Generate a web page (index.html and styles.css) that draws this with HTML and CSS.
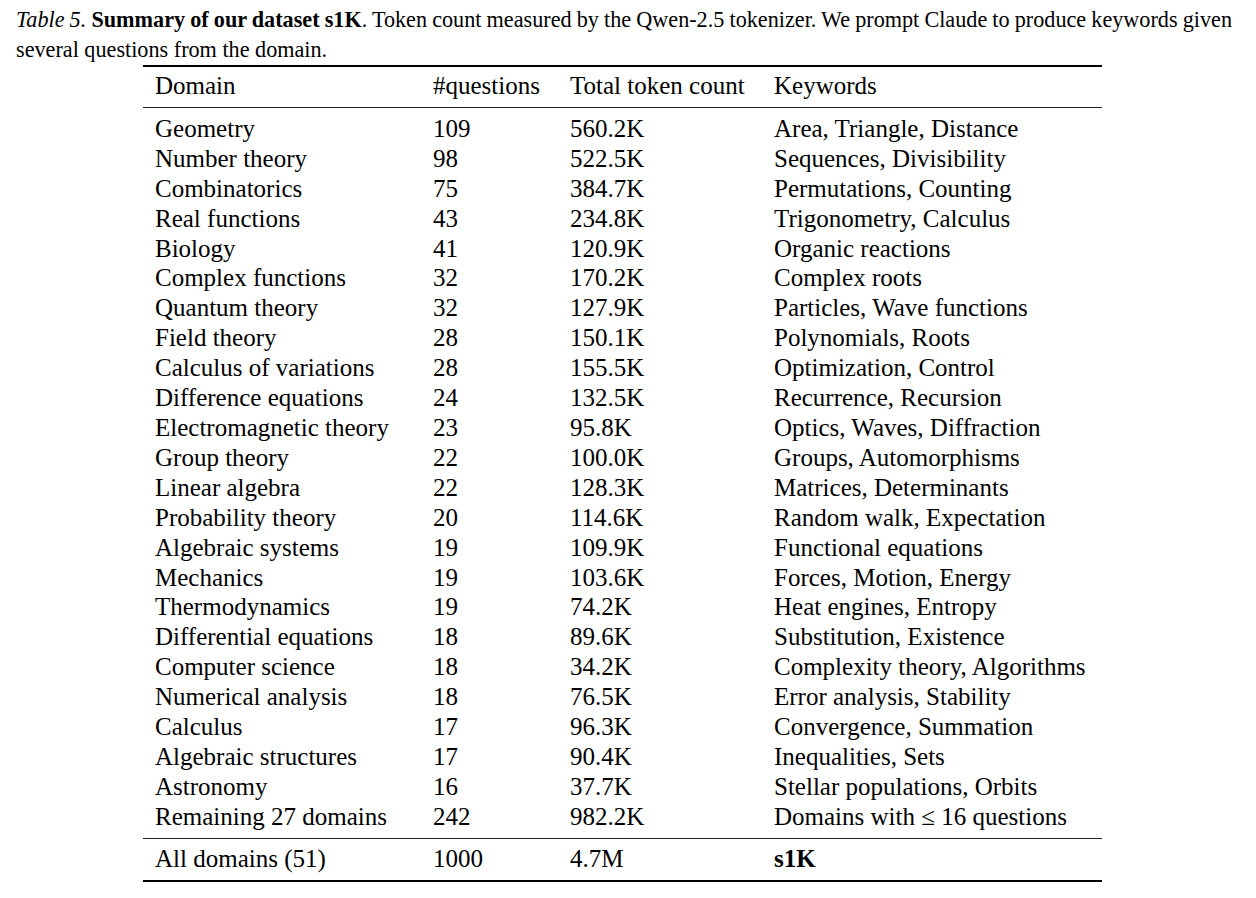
FILE: index.html
```html
<!DOCTYPE html>
<html lang="en">
<head>
<meta charset="utf-8">
<title>Table 5. Summary of our dataset s1K</title>
<link rel="stylesheet" href="styles.css">
</head>
<body>
<div class="page">
  <p class="caption"><span class="cap-line1"><i>Table 5.</i> <b>Summary of our dataset s1K</b>. Token count measured by the Qwen-2.5 tokenizer. We prompt Claude to produce keywords given</span> <span class="cap-line2">several questions from the domain.</span></p>
  <table class="data">
    <colgroup>
      <col class="c1"><col class="c2"><col class="c3"><col class="c4">
    </colgroup>
    <thead>
      <tr><th>Domain</th><th>#questions</th><th>Total token count</th><th>Keywords</th></tr>
    </thead>
    <tbody class="body">
      <tr><td>Geometry</td><td>109</td><td>560.2K</td><td>Area, Triangle, Distance</td></tr>
      <tr><td>Number theory</td><td>98</td><td>522.5K</td><td>Sequences, Divisibility</td></tr>
      <tr><td>Combinatorics</td><td>75</td><td>384.7K</td><td>Permutations, Counting</td></tr>
      <tr><td>Real functions</td><td>43</td><td>234.8K</td><td>Trigonometry, Calculus</td></tr>
      <tr><td>Biology</td><td>41</td><td>120.9K</td><td>Organic reactions</td></tr>
      <tr><td>Complex functions</td><td>32</td><td>170.2K</td><td>Complex roots</td></tr>
      <tr><td>Quantum theory</td><td>32</td><td>127.9K</td><td>Particles, Wave functions</td></tr>
      <tr><td>Field theory</td><td>28</td><td>150.1K</td><td>Polynomials, Roots</td></tr>
      <tr><td>Calculus of variations</td><td>28</td><td>155.5K</td><td>Optimization, Control</td></tr>
      <tr><td>Difference equations</td><td>24</td><td>132.5K</td><td>Recurrence, Recursion</td></tr>
      <tr><td>Electromagnetic theory</td><td>23</td><td>95.8K</td><td>Optics, Waves, Diffraction</td></tr>
      <tr><td>Group theory</td><td>22</td><td>100.0K</td><td>Groups, Automorphisms</td></tr>
      <tr><td>Linear algebra</td><td>22</td><td>128.3K</td><td>Matrices, Determinants</td></tr>
      <tr><td>Probability theory</td><td>20</td><td>114.6K</td><td>Random walk, Expectation</td></tr>
      <tr><td>Algebraic systems</td><td>19</td><td>109.9K</td><td>Functional equations</td></tr>
      <tr><td>Mechanics</td><td>19</td><td>103.6K</td><td>Forces, Motion, Energy</td></tr>
      <tr><td>Thermodynamics</td><td>19</td><td>74.2K</td><td>Heat engines, Entropy</td></tr>
      <tr><td>Differential equations</td><td>18</td><td>89.6K</td><td>Substitution, Existence</td></tr>
      <tr><td>Computer science</td><td>18</td><td>34.2K</td><td>Complexity theory, Algorithms</td></tr>
      <tr><td>Numerical analysis</td><td>18</td><td>76.5K</td><td>Error analysis, Stability</td></tr>
      <tr><td>Calculus</td><td>17</td><td>96.3K</td><td>Convergence, Summation</td></tr>
      <tr><td>Algebraic structures</td><td>17</td><td>90.4K</td><td>Inequalities, Sets</td></tr>
      <tr><td>Astronomy</td><td>16</td><td>37.7K</td><td>Stellar populations, Orbits</td></tr>
      <tr><td>Remaining 27 domains</td><td>242</td><td>982.2K</td><td>Domains with &le; 16 questions</td></tr>
    </tbody>
    <tfoot>
      <tr><td>All domains (51)</td><td>1000</td><td>4.7M</td><td><b>s1K</b></td></tr>
    </tfoot>
  </table>
</div>
</body>
</html>
```

FILE: styles.css
```css
html, body {
  margin: 0;
  padding: 0;
  background: #ffffff;
}

body {
  color: #000000;
  font-family: "Liberation Serif", "Times New Roman", serif;
}

.page {
  width: 1216px;
  padding: 5px 0 0 16px;
}

.caption {
  margin: 0;
  font-size: 22.2px;
  line-height: 30px;
}

.cap-line1 {
  display: block;
  white-space: nowrap;
  word-spacing: -2.2px;
  text-align: justify;
  text-align-last: justify;
}

.cap-line2 {
  display: block;
}

.caption b {
  font-weight: bold;
}

.data {
  width: 959px;
  margin: 0 0 0 127px;
  border-collapse: collapse;
  table-layout: fixed;
  font-size: 25px;
  line-height: 29.9px;
  border-top: 2px solid #000;
  border-bottom: 2px solid #000;
}

.c1 { width: 278px; }
.c2 { width: 137px; }
.c3 { width: 204px; }
.c4 { width: 340px; }

.data th,
.data td {
  padding: 0 0 0 12px;
  text-align: left;
  font-weight: normal;
  white-space: nowrap;
  vertical-align: top;
}

.data thead th {
  padding-top: 4px;
  padding-bottom: 6px;
  border-bottom: 1px solid #222;
}

.data tbody tr:first-child td {
  padding-top: 6px;
}

.data tbody tr:last-child td {
  padding-bottom: 6px;
}

.data tfoot td {
  border-top: 1px solid #222;
  padding-top: 5px;
  padding-bottom: 6px;
}

.data tfoot b {
  font-weight: bold;
}
```
